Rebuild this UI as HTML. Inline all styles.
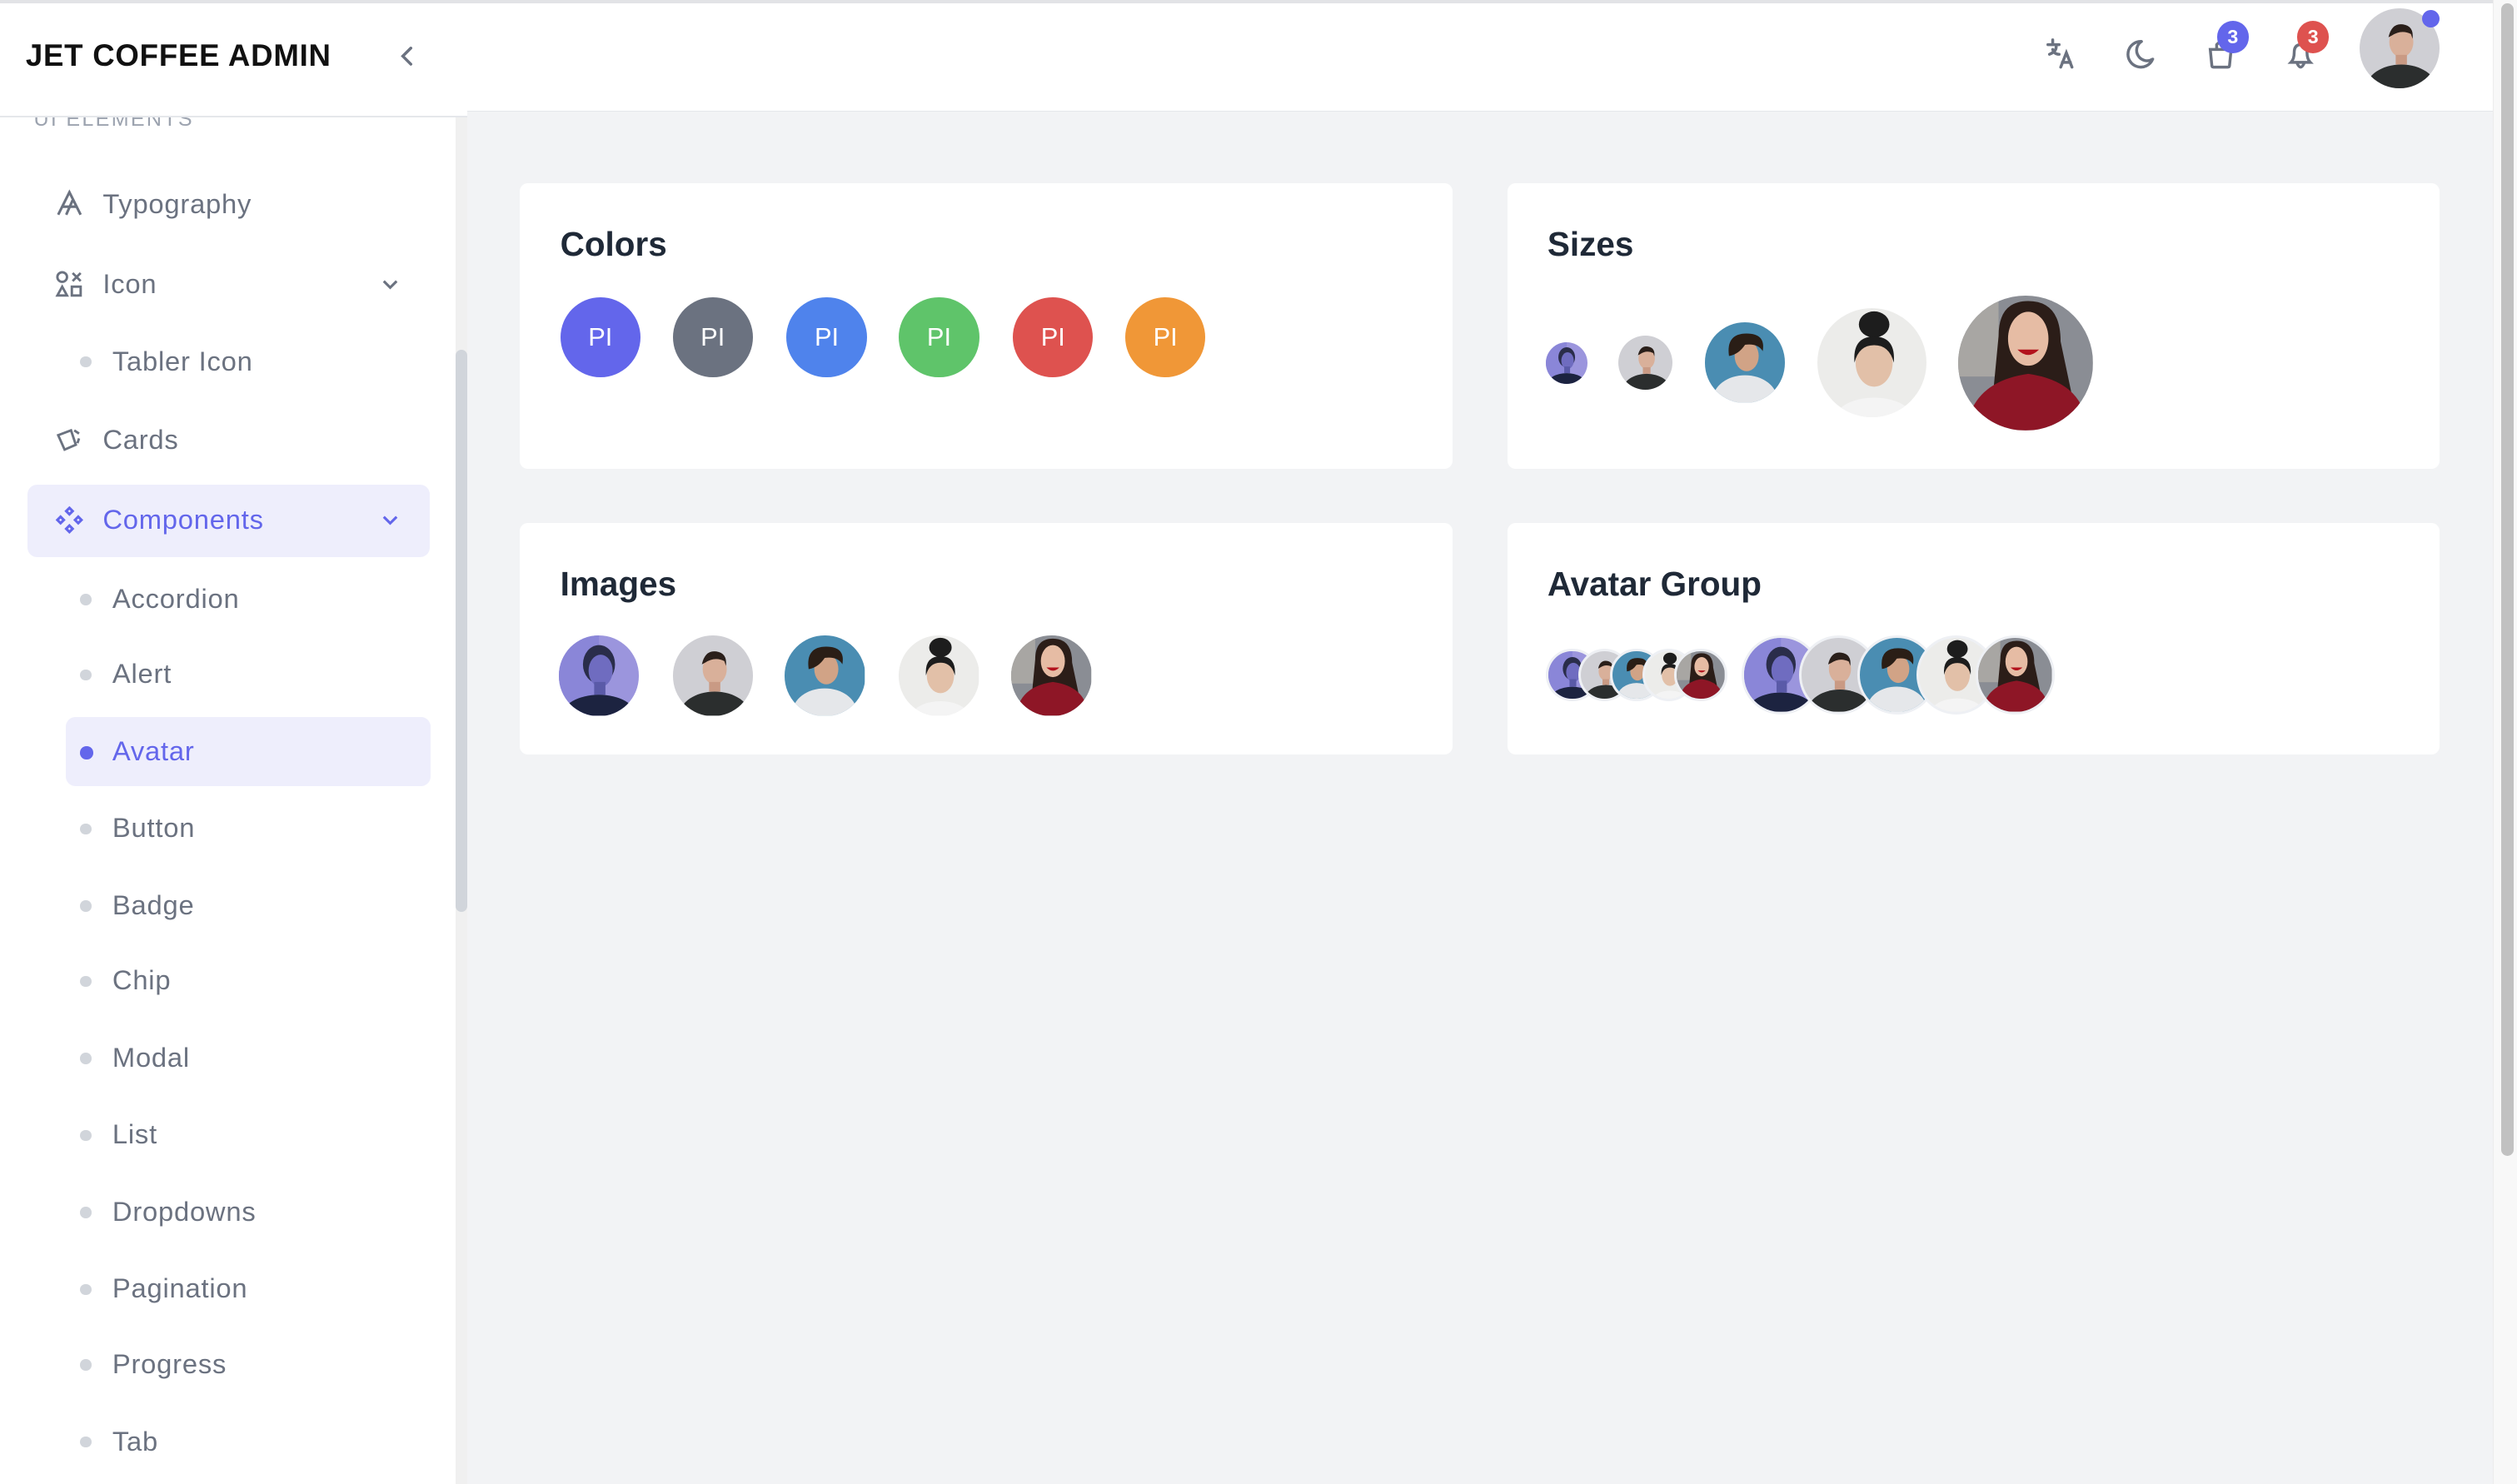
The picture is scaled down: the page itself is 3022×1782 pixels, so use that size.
<!DOCTYPE html>
<html><head><meta charset="utf-8">
<style>
html,body{margin:0;padding:0;width:3022px;height:1782px;overflow:hidden;background:#f2f3f5}
#z{zoom:1.92729;width:1568px;height:925px;position:relative;font-family:"Liberation Sans",sans-serif;background:#f2f3f5;overflow:hidden}
.abs{position:absolute}
.side{left:0;top:0;width:291px;height:925px;background:#fff}
.brand{left:16px;top:24px;font-size:19px;font-weight:bold;color:#111;letter-spacing:.4px}
.sep{left:0;top:72px;width:291px;height:1px;background:#e5e7eb}
.item{left:34px;font-size:17px;color:#6b7280;height:24px;line-height:24px;letter-spacing:.4px}
.item svg{position:absolute;left:0;top:3px}
.item span{position:absolute;left:30px;white-space:nowrap}
.sub{left:50px;font-size:17px;color:#6b7280;line-height:24px;height:24px;letter-spacing:.4px}
.sub i{position:absolute;left:0;top:9px;width:7px;height:7px;border-radius:50%;background:#d1d5db}
.sub span{position:absolute;left:20px;white-space:nowrap}
.header{left:291px;top:0;width:1262px;height:69px;background:#fff;border-bottom:1px solid #e5e7eb}
.card{background:#fff;border-radius:5px}
.card h2{position:absolute;left:25px;top:26px;margin:0;font-size:21px;color:#1f2937;font-weight:bold}
.pi{width:50px;height:50px;border-radius:50%;color:#fff;font-size:16px;text-align:center;line-height:50px;top:185px}
.av{position:absolute;border-radius:50%;overflow:hidden}
.av svg{display:block;width:100%;height:100%}
.g{border:2px solid #eef0f4;background:#eef0f4}
.badge{width:20px;height:20px;border-radius:50%;color:#fff;font-size:12px;font-weight:bold;text-align:center;line-height:20px}
</style></head><body><div id="z">
<svg width="0" height="0" style="position:absolute">
<defs>
<symbol id="a1" viewBox="0 0 100 100"><rect width="100" height="100" fill="#9b95dd"/><rect x="0" y="0" width="50" height="100" fill="#8a86d8"/><ellipse cx="50" cy="36" rx="20" ry="24" fill="#2a2d4a"/><ellipse cx="52" cy="44" rx="15" ry="20" fill="#6f6cc0"/><rect x="44" y="58" width="14" height="16" fill="#5a5aa8"/><ellipse cx="50" cy="100" rx="46" ry="26" fill="#1c2340"/></symbol>
<symbol id="a2" viewBox="0 0 100 100"><rect width="100" height="100" fill="#cfcfd4"/><ellipse cx="52" cy="42" rx="15" ry="19" fill="#d9b09a"/><path d="M36 36 Q40 18 54 20 Q68 22 66 38 L64 32 Q52 26 40 34Z" fill="#2a1f1a"/><rect x="45" y="58" width="14" height="12" fill="#c99a84"/><ellipse cx="52" cy="100" rx="44" ry="30" fill="#2b2e2e"/></symbol>
<symbol id="a3" viewBox="0 0 100 100"><rect width="100" height="100" fill="#4a8db2"/><ellipse cx="52" cy="42" rx="15" ry="19" fill="#d1a386"/><path d="M30 42 Q26 14 52 14 Q76 14 72 36 Q66 26 50 28 Q42 40 30 42Z" fill="#2a1e16"/><ellipse cx="50" cy="96" rx="40" ry="30" fill="#e5e7ea"/></symbol>
<symbol id="a4" viewBox="0 0 100 100"><rect width="100" height="100" fill="#ececea"/><ellipse cx="52" cy="15" rx="14" ry="12" fill="#1d1d1d"/><ellipse cx="52" cy="50" rx="17" ry="22" fill="#e2c0a8"/><path d="M34 50 Q32 26 52 26 Q72 26 70 50 Q66 34 52 34 Q38 34 34 50Z" fill="#1d1d1d"/><ellipse cx="52" cy="102" rx="36" ry="20" fill="#f4f4f4"/></symbol>
<symbol id="a5" viewBox="0 0 100 100"><rect width="100" height="100" fill="#8a8d94"/><rect x="0" y="0" width="30" height="60" fill="#a8a6a3"/><path d="M30 30 Q30 4 52 4 Q76 4 76 34 L84 72 L26 72Z" fill="#2b1d18"/><ellipse cx="52" cy="32" rx="15" ry="20" fill="#e6bca4"/><path d="M44 40 Q52 48 60 40Z" fill="#b3121c"/><path d="M6 100 Q10 64 52 58 Q94 64 96 100Z" fill="#8e1626"/></symbol>
</defs></svg>

<div class="abs side"></div>
<div class="abs" style="left:21px;top:67px;font-size:13px;color:#9ca3af;letter-spacing:1.2px">UI ELEMENTS</div>
<div class="abs" style="left:0;top:0;width:291px;height:72px;background:#fff"></div>
<div class="abs brand">JET COFFEE ADMIN</div>
<svg class="abs" style="left:246px;top:27px" width="14" height="16" viewBox="0 0 14 16"><path d="M10 3 L5 8 L10 13" stroke="#6b7280" stroke-width="1.8" fill="none" stroke-linecap="round"/></svg>
<div class="abs sep"></div>
<div class="abs" style="left:284px;top:73px;width:7px;height:852px;background:#f0f0f0"></div>
<div class="abs" style="left:284px;top:218px;width:7px;height:350px;background:#d1d5db;border-radius:4px"></div>

<div class="abs item" style="top:115px"><svg width="18" height="18" viewBox="0 0 18 18"><path d="M2 16 L9 2 L16 16 M5 11 H13 M7 16 L11 7" stroke="#6b7280" stroke-width="1.6" fill="none"/></svg><span>Typography</span></div>
<div class="abs item" style="top:165px"><svg width="18" height="18" viewBox="0 0 18 18" fill="none" stroke="#6b7280" stroke-width="1.5"><circle cx="4.5" cy="4.5" r="3"/><path d="M11 2 L16 7 M16 2 L11 7 M1.5 16 L4.5 10.5 L7.5 16Z"/><rect x="10.5" y="10.5" width="5.5" height="5.5"/></svg><span>Icon</span></div>
<svg class="abs" style="left:236px;top:170px" width="14" height="14" viewBox="0 0 14 14"><path d="M3 5 L7 9 L11 5" stroke="#6b7280" stroke-width="1.6" fill="none"/></svg>
<div class="abs sub" style="top:213px"><i></i><span>Tabler Icon</span></div>
<div class="abs item" style="top:262px"><svg width="18" height="18" viewBox="0 0 18 18" fill="none" stroke="#6b7280" stroke-width="1.5"><path d="M2 6 L10 3 L13 12 L6 15Z M12 3 L15 5 M15 8 L14 11"/></svg><span>Cards</span></div>
<div class="abs" style="left:17px;top:302px;width:251px;height:45px;background:#eeeefc;border-radius:6px"></div>
<div class="abs item" style="top:312px;color:#6366eb"><svg width="18" height="18" viewBox="0 0 18 18" fill="none" stroke="#6366eb" stroke-width="1.6"><path d="M9 1.5 L11 3.5 L9 5.5 L7 3.5Z M9 12.5 L11 14.5 L9 16.5 L7 14.5Z M3.5 7 L5.5 9 L3.5 11 L1.5 9Z M14.5 7 L16.5 9 L14.5 11 L12.5 9Z"/></svg><span>Components</span></div>
<svg class="abs" style="left:236px;top:317px" width="14" height="14" viewBox="0 0 14 14"><path d="M3 5 L7 9 L11 5" stroke="#6366eb" stroke-width="1.6" fill="none"/></svg>
<div class="abs sub" style="top:361px"><i></i><span>Accordion</span></div>
<div class="abs sub" style="top:408px"><i></i><span>Alert</span></div>
<div class="abs" style="left:41px;top:447px;width:227px;height:43px;background:#eeeefc;border-radius:6px"></div>
<div class="abs sub" style="top:456px;color:#6366eb"><i style="background:#6366eb;width:8px;height:8px"></i><span>Avatar</span></div>
<div class="abs sub" style="top:504px"><i></i><span>Button</span></div>
<div class="abs sub" style="top:552px"><i></i><span>Badge</span></div>
<div class="abs sub" style="top:599px"><i></i><span>Chip</span></div>
<div class="abs sub" style="top:647px"><i></i><span>Modal</span></div>
<div class="abs sub" style="top:695px"><i></i><span>List</span></div>
<div class="abs sub" style="top:743px"><i></i><span>Dropdowns</span></div>
<div class="abs sub" style="top:791px"><i></i><span>Pagination</span></div>
<div class="abs sub" style="top:838px"><i></i><span>Progress</span></div>
<div class="abs sub" style="top:886px"><i></i><span>Tab</span></div>

<div class="abs header"></div>
<div class="abs" style="left:0;top:0;width:1568px;height:2px;background:#e2e3e6"></div>
<svg class="abs" style="left:1273px;top:23px" width="22" height="22" viewBox="0 0 22 22" fill="none" stroke="#6b7280" stroke-width="1.8" stroke-linecap="round"><path d="M3 5 H10 M6 2 V5 M4 11 Q9 9 8 5 M6 8 Q7 11 10 11 M11 19 L14.5 10 L18 19 M12 16 H17"/></svg>
<svg class="abs" style="left:1322px;top:23px" width="22" height="22" viewBox="0 0 22 22"><path d="M12 3 A8 8 0 1 0 19 14 A6.5 6.5 0 0 1 12 3Z" stroke="#6b7280" stroke-width="1.8" fill="none" stroke-linejoin="round"/></svg>
<svg class="abs" style="left:1373px;top:23px" width="22" height="22" viewBox="0 0 22 22" fill="none" stroke="#6b7280" stroke-width="1.8" stroke-linecap="round"><path d="M4 8 H17 L16 18 Q16 19 15 19 H6 Q5 19 5 18Z M8 8 V5 Q10.5 2 13 5 V8"/></svg>
<div class="abs badge" style="left:1381px;top:13px;background:#6366eb">3</div>
<svg class="abs" style="left:1422px;top:23px" width="22" height="22" viewBox="0 0 22 22" fill="none" stroke="#6b7280" stroke-width="1.8" stroke-linecap="round"><path d="M5 16 Q7 14 7 10 Q7 5 11 5 Q15 5 15 10 Q15 14 17 16Z M9 17 Q11 21 13 17"/></svg>
<div class="abs badge" style="left:1431px;top:13px;background:#de524f">3</div>
<div class="av" style="left:1470px;top:5px;width:50px;height:50px"><svg><use href="#a2"/></svg></div>
<div class="abs" style="left:1509px;top:6px;width:11px;height:11px;border-radius:50%;background:#6366eb"></div>

<div class="abs" style="left:1553px;top:0;width:15px;height:925px;background:#f8f8f8;border-left:1px solid #ececec"></div>
<div class="abs" style="left:1558px;top:2px;width:8px;height:718px;background:#c1c1c1;border-radius:4px"></div>

<div class="abs card" style="left:324px;top:114px;width:581px;height:178px"><h2>Colors</h2></div>
<div class="abs pi" style="left:349px;background:#6366eb">PI</div>
<div class="abs pi" style="left:419px;background:#6b7280">PI</div>
<div class="abs pi" style="left:490px;background:#4f83ec">PI</div>
<div class="abs pi" style="left:560px;background:#5fc46a">PI</div>
<div class="abs pi" style="left:631px;background:#de524f">PI</div>
<div class="abs pi" style="left:701px;background:#f09737">PI</div>

<div class="abs card" style="left:939px;top:114px;width:581px;height:178px"><h2>Sizes</h2></div>
<div class="av" style="left:963px;top:213px;width:26px;height:26px"><svg><use href="#a1"/></svg></div>
<div class="av" style="left:1008px;top:209px;width:34px;height:34px"><svg><use href="#a2"/></svg></div>
<div class="av" style="left:1062px;top:201px;width:50px;height:50px"><svg><use href="#a3"/></svg></div>
<div class="av" style="left:1132px;top:192px;width:68px;height:68px"><svg><use href="#a4"/></svg></div>
<div class="av" style="left:1220px;top:184px;width:84px;height:84px"><svg><use href="#a5"/></svg></div>

<div class="abs card" style="left:324px;top:326px;width:581px;height:144px"><h2>Images</h2></div>
<div class="av" style="left:348px;top:396px;width:50px;height:50px"><svg><use href="#a1"/></svg></div>
<div class="av" style="left:419px;top:396px;width:50px;height:50px"><svg><use href="#a2"/></svg></div>
<div class="av" style="left:489px;top:396px;width:50px;height:50px"><svg><use href="#a3"/></svg></div>
<div class="av" style="left:560px;top:396px;width:50px;height:50px"><svg><use href="#a4"/></svg></div>
<div class="av" style="left:630px;top:396px;width:50px;height:50px"><svg><use href="#a5"/></svg></div>

<div class="abs card" style="left:939px;top:326px;width:581px;height:144px"><h2>Avatar Group</h2></div>
<div class="av g" style="left:963px;top:404px;width:30px;height:30px"><svg><use href="#a1"/></svg></div>
<div class="av g" style="left:983px;top:404px;width:30px;height:30px"><svg><use href="#a2"/></svg></div>
<div class="av g" style="left:1003px;top:404px;width:30px;height:30px"><svg><use href="#a3"/></svg></div>
<div class="av g" style="left:1023px;top:404px;width:30px;height:30px"><svg><use href="#a4"/></svg></div>
<div class="av g" style="left:1043px;top:404px;width:30px;height:30px"><svg><use href="#a5"/></svg></div>
<div class="av g" style="left:1085px;top:396px;width:46px;height:46px"><svg><use href="#a1"/></svg></div>
<div class="av g" style="left:1121px;top:396px;width:46px;height:46px"><svg><use href="#a2"/></svg></div>
<div class="av g" style="left:1157px;top:396px;width:46px;height:46px"><svg><use href="#a3"/></svg></div>
<div class="av g" style="left:1194px;top:396px;width:46px;height:46px"><svg><use href="#a4"/></svg></div>
<div class="av g" style="left:1231px;top:396px;width:46px;height:46px"><svg><use href="#a5"/></svg></div>
</div></body></html>
